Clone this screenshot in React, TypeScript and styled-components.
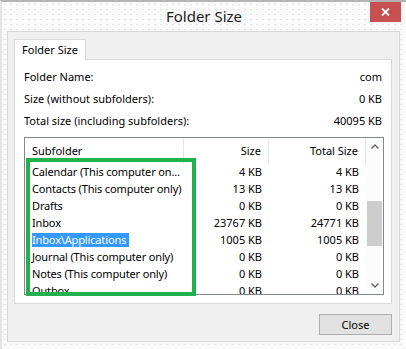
import styled, { createGlobalStyle } from 'styled-components';

const Global = createGlobalStyle`
  html, body { margin: 0; padding: 0; background: #fff; }
  body { font-family: 'Noto Sans', 'Segoe UI', sans-serif; color: #000; }
`;

const Window = styled.div`
  width: 406px;
  height: 349px;
  box-sizing: border-box;
  display: flex;
  flex-direction: column;
  border-top: 2px solid #b3b3b3;
  border-left: 2px solid #e4e4e4;
  background-color: #fafafa;
  background-image: radial-gradient(#e4e4e4 0.6px, transparent 0.9px);
  background-size: 6px 5px;
  overflow: hidden;
`;
const TitleBar = styled.div`
  height: 29px;
  flex: none;
  display: grid;
  grid-template-columns: 1fr auto 1fr;
`;
const Title = styled.div`
  grid-column: 2;
  font-size: 15px;
  line-height: 29px;
  color: #1a1a1a;
`;
const CloseX = styled.button`
  grid-column: 3;
  justify-self: end;
  width: 31px;
  height: 20px;
  margin-right: 5px;
  border: none;
  padding: 0;
  background: #c75050;
  display: flex;
  align-items: center;
  justify-content: center;
`;
const Panel = styled.div`
  flex: 1;
  margin: 0 6px 7px 5px;
  border: 1px solid #d7d7d7;
  background: #f0f0f0;
  padding: 7px 7px 0 6px;
  display: flex;
  flex-direction: column;
`;
const TabStrip = styled.div`
  display: flex;
  height: 20px;
`;
const Tab = styled.div`
  width: 72px;
  height: 21px;
  box-sizing: border-box;
  border: 1px solid #d9d9d9;
  border-bottom: none;
  background: #fff;
  font-size: 11px;
  line-height: 20px;
  text-align: center;
  position: relative;
  z-index: 1;
`;
const TabPage = styled.div`
  height: 245px;
  box-sizing: border-box;
  border: 1px solid #d9d9d9;
  background: #fff;
  padding: 5px 7px 0 9px;
  display: flex;
  flex-direction: column;
`;
const InfoRow = styled.div`
  display: flex;
  justify-content: space-between;
  height: 22px;
  line-height: 23px;
  font-size: 11px;
  padding-right: 2px;
`;
const List = styled.div`
  margin-top: 6px;
  height: 158px;
  box-sizing: border-box;
  border: 1px solid #828790;
  display: flex;
  position: relative;
`;
const Table = styled.div`
  flex: 1;
  overflow: hidden;
`;
const Grid = styled.div<{ $h: number }>`
  display: grid;
  grid-template-columns: 159px 85px 1fr;
  height: ${(p) => p.$h}px;
  font-size: 11px;
`;
const HeadCell = styled.div<{ $right?: boolean }>`
  padding: 0 7px;
  line-height: 26px;
  text-align: ${(p) => (p.$right ? 'right' : 'left')};
  border-right: 1px solid #e5e5e5;
`;
const Cell = styled.div<{ $right?: boolean }>`
  padding: ${(p) => (p.$right ? '0 7px' : '0 0 0 7px')};
  line-height: 17px;
  white-space: nowrap;
  overflow: hidden;
  text-align: ${(p) => (p.$right ? 'right' : 'left')};
`;
const Label = styled.span<{ $sel?: boolean }>`
  display: inline-block;
  line-height: 14px;
  padding-right: 3px;
  letter-spacing: -0.15px;
  background: ${(p) => (p.$sel ? '#3399ff' : 'transparent')};
  color: ${(p) => (p.$sel ? '#fff' : '#000')};
`;
const ScrollBar = styled.div`
  width: 17px;
  flex: none;
  background: #fcfcfc;
  display: flex;
  flex-direction: column;
`;
const Arrow = styled.div`
  height: 17px;
  flex: none;
  display: flex;
  align-items: center;
  justify-content: center;
`;
const Track = styled.div`
  flex: 1;
  padding: 46px 1px 0;
`;
const Thumb = styled.div`
  height: 45px;
  background: #cdcdcd;
`;
const Mark = styled.div`
  position: absolute;
  left: 1px;
  top: 20px;
  width: 170px;
  height: 138px;
  box-sizing: border-box;
  border: 4px solid #22b14c;
  pointer-events: none;
`;
const Footer = styled.div`
  display: flex;
  justify-content: flex-end;
  margin-top: 10px;
`;
const Button = styled.button`
  width: 73px;
  height: 21px;
  border: 1px solid #adadad;
  background: #e1e1e1;
  font-family: inherit;
  font-size: 11px;
  padding: 0;
  color: #000;
`;

const rows = [
  ['Calendar (This computer on...', '4 KB', '4 KB'],
  ['Contacts (This computer only)', '13 KB', '13 KB'],
  ['Drafts', '0 KB', '0 KB'],
  ['Inbox', '23767 KB', '24771 KB'],
  ['Inbox\\Applications', '1005 KB', '1005 KB'],
  ['Journal (This computer only)', '0 KB', '0 KB'],
  ['Notes (This computer only)', '0 KB', '0 KB'],
  ['Outbox', '0 KB', '0 KB'],
];

function Chevron({ up }: { up?: boolean }) {
  return (
    <svg width="8" height="5" viewBox="0 0 8 5">
      <path d={up ? 'M0.5 4.5 L4 1 L7.5 4.5' : 'M0.5 0.5 L4 4 L7.5 0.5'} fill="none" stroke="#606060" strokeWidth="1.4" />
    </svg>
  );
}

export default function App() {
  return (
    <>
      <Global />
      <Window>
        <TitleBar>
          <Title>Folder Size</Title>
          <CloseX aria-label="Close">
            <svg width="9" height="8" viewBox="0 0 9 8">
              <path d="M1 0.5 L8 7.5 M8 0.5 L1 7.5" stroke="#fff" strokeWidth="1.8" />
            </svg>
          </CloseX>
        </TitleBar>
        <Panel>
          <TabStrip>
            <Tab>Folder Size</Tab>
          </TabStrip>
          <TabPage>
            <InfoRow>
              <span>Folder Name:</span>
              <span>com</span>
            </InfoRow>
            <InfoRow>
              <span>Size (without subfolders):</span>
              <span>0 KB</span>
            </InfoRow>
            <InfoRow>
              <span>Total size (including subfolders):</span>
              <span>40095 KB</span>
            </InfoRow>
            <List>
              <Table>
                <Grid $h={25}>
                  <HeadCell>Subfolder</HeadCell>
                  <HeadCell $right>Size</HeadCell>
                  <HeadCell $right>Total Size</HeadCell>
                </Grid>
                {rows.map(([name, size, total], i) => (
                  <Grid $h={17} key={name}>
                    <Cell>
                      <Label $sel={i === 4}>{name}</Label>
                    </Cell>
                    <Cell $right>{size}</Cell>
                    <Cell $right>{total}</Cell>
                  </Grid>
                ))}
              </Table>
              <ScrollBar>
                <Arrow>
                  <Chevron up />
                </Arrow>
                <Track>
                  <Thumb />
                </Track>
                <Arrow>
                  <Chevron />
                </Arrow>
              </ScrollBar>
              <Mark />
            </List>
          </TabPage>
          <Footer>
            <Button>Close</Button>
          </Footer>
        </Panel>
      </Window>
    </>
  );
}
